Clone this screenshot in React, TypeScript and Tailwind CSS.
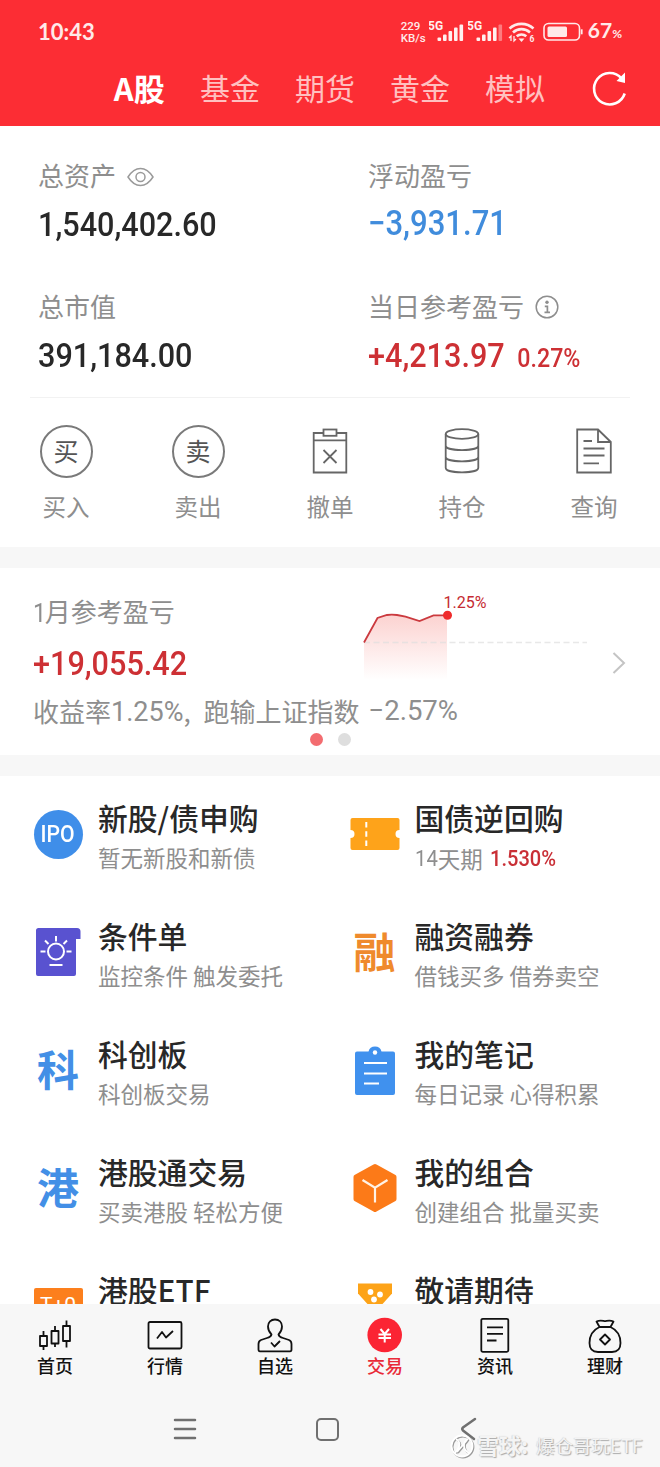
import type { ReactNode } from "react";
import clsx from "clsx";

const TABS = ["A股", "基金", "期货", "黄金", "模拟"];

function Figure({ children, className }: { children: ReactNode; className?: string }) {
  return (
    <span
      className={clsx(
        "block w-max origin-left scale-x-[0.9] font-['Roboto','Noto_Sans_CJK_SC',sans-serif] font-medium whitespace-nowrap",
        className
      )}
    >
      {children}
    </span>
  );
}

// ---- STATUS BAR ----

function Signal({ weak }: { weak?: boolean }) {
  return (
    <svg width="36" height="22" viewBox="0 0 36 22" fill="#fff0f0" className="shrink-0">
      <text x="-1" y="9" fontSize="12" fontWeight="700" fontFamily="Roboto">
        5G
      </text>
      <rect x="8.500" y="16.500" width="3.600" height="3.500" rx="1" />
      <rect x="14" y="13.500" width="3.600" height="6.500" rx="1" />
      <rect x="19.500" y="10" width="3.600" height="10" rx="1" />
      <rect x="25" y="6.500" width="3.600" height="13.500" rx="1" />
      <rect x="30.500" y="3.500" width="3.600" height="16.500" rx="1" opacity={weak ? 0.4 : 1} />
    </svg>
  );
}

function StatusBar() {
  return (
    <div className="flex h-[63px] items-center pr-[38px] pl-[38px] text-[#ffe9e9]">
      <span className="font-['Lato','Roboto',sans-serif] text-[22px] font-bold">10:43</span>
      <div className="ml-auto flex items-center">
        <div className="w-[28px] font-['Roboto',sans-serif] text-[11.500px] font-medium">
          <div className="leading-[12px]">229</div>
          <div className="leading-[12px]">KB/s</div>
        </div>
        <Signal />
        <span className="w-[3px]" />
        <Signal weak />
        <svg width="29" height="22" viewBox="0 0 29 22" fill="none" stroke="#ffe9e9" className="ml-[4px]">
          <path d="M1.500 7.500a18 18 0 0 1 24 0M5 11.500a12.500 12.500 0 0 1 17 0M8.700 15.300a7.200 7.200 0 0 1 9.600 0" strokeWidth="2.600" />
          <path d="M10.500 17.500h6l-3 3.500z" fill="#ffe9e9" stroke="none" />
          <path d="M3 20v-5l-2 2M6 15v5l2-2" strokeWidth="1.300" />
          <text x="21.500" y="21" fontSize="8.500" fontWeight="700" fontFamily="Roboto" fill="#ffe9e9" stroke="none">
            6
          </text>
        </svg>
        <svg width="42" height="20" viewBox="0 0 42 20" fill="none" className="ml-[6px]">
          <rect x="1" y="1.500" width="35.500" height="16.500" rx="4.500" stroke="#ffe9e9" strokeWidth="1.600" />
          <rect x="4.500" y="4.500" width="19.500" height="10.500" rx="1.500" fill="#ffe9e9" />
          <path d="M38.700 7.300v5" stroke="#ffe9e9" strokeWidth="1.800" />
        </svg>
        <span className="ml-[3px] font-['Lato','Roboto',sans-serif] text-[21px] leading-[22px] font-bold">
          67<span className="text-[12px]">%</span>
        </span>
      </div>
    </div>
  );
}

function Header() {
  return (
    <header className="h-[126px] bg-[#fc2d34]">
      <StatusBar />
      <nav className="flex h-[52px] items-center pl-[91px]">
        {TABS.map((tab, i) => (
          <span
            key={tab}
            className={clsx(
              "pb-[4px] text-center text-[30px] leading-none",
              i === 0 ? "w-[91.500px] pl-[5px] text-[31px] font-bold text-white" : "w-[95px] text-[#ffc0c0]"
            )}
          >
            {tab}
          </span>
        ))}
        <svg width="40" height="40" viewBox="0 0 40 40" fill="none" stroke="white" strokeWidth="2.600" className="ml-[27px]">
          <path d="M34.700 24.500a15.700 15.700 0 1 1-3.200-15.200" />
          <path d="M35 3.500v10.500l-8.500-2z" fill="white" stroke="none" />
        </svg>
      </nav>
    </header>
  );
}

// ---- ACCOUNT ----

function Balance({ label, icon, children }: { label: string; icon?: ReactNode; children: ReactNode }) {
  return (
    <div className="h-[131px]">
      <div className="flex h-[36px] items-center gap-[11px] text-[26px] text-[#8e8e8e]">
        <span className="pb-[3px] leading-none">{label}</span>
        {icon}
      </div>
      <div className="mt-[10px] flex h-[40px] items-center text-[34px]">{children}</div>
    </div>
  );
}

function EyeIcon() {
  return (
    <svg width="27" height="20" viewBox="0 0 27 20" fill="none" stroke="#9a9a9a" strokeWidth="1.500" className="mt-px">
      <path d="M1 10C4.500 4.500 8.500 1.500 13.500 1.500S22.500 4.500 26 10C22.500 15.500 18.500 18.500 13.500 18.500S4.500 15.500 1 10Z" />
      <circle cx="13.500" cy="10" r="4.500" />
    </svg>
  );
}

function InfoIcon() {
  return (
    <svg width="24" height="24" viewBox="0 0 24 24" fill="none" stroke="#8e8e8e" strokeWidth="1.500">
      <circle cx="12" cy="12" r="10.800" />
      <circle cx="12" cy="7.300" r="1.700" fill="#8e8e8e" stroke="none" />
      <path d="M9.800 11.300H12.400V17.200M9.500 17.400H15" strokeWidth="1.700" />
    </svg>
  );
}

function CircleGlyph({ char }: { char: string }) {
  return (
    <span className="flex size-[53px] items-center justify-center rounded-full border-2 border-[#7a7a7a] pb-[2px] text-[25px] leading-none text-[#555]">
      {char}
    </span>
  );
}

const ACTIONS: { label: string; icon: ReactNode }[] = [
  { label: "买入", icon: <CircleGlyph char="买" /> },
  { label: "卖出", icon: <CircleGlyph char="卖" /> },
  {
    label: "撤单",
    icon: (
      <svg width="54" height="54" viewBox="0 0 54 54" fill="none" stroke="#666" strokeWidth="1.800">
        <path d="M20.500 9H10.700V48.500H43.300V9H33.500M10.700 16.300H43.300" />
        <rect x="20.500" y="5.500" width="13" height="6.300" />
        <path d="M20.500 26L33.500 39M33.500 26L20.500 39" />
      </svg>
    ),
  },
  {
    label: "持仓",
    icon: (
      <svg width="54" height="54" viewBox="0 0 54 54" fill="none" stroke="#666" strokeWidth="1.800">
        <ellipse cx="27" cy="10" rx="16.300" ry="4.800" />
        <path d="M10.700 10V43.700C10.700 49.900 43.300 49.900 43.300 43.700V10M10.700 21.500C10.700 27.700 43.300 27.700 43.300 21.500M10.700 32.700C10.700 38.900 43.300 38.900 43.300 32.700" />
      </svg>
    ),
  },
  {
    label: "查询",
    icon: (
      <svg width="54" height="54" viewBox="0 0 54 54" fill="none" stroke="#666" strokeWidth="1.800">
        <path d="M10.200 5.500H31L43.800 18V48.500H10.200ZM31 5.500V18H43.800" />
        <path d="M16.500 17H25M16.500 24.500H37.500M16.500 31.500H37.500M16.500 39.300H32" />
      </svg>
    ),
  },
];

function Account() {
  return (
    <section className="h-[421px] bg-white">
      <div className="grid h-[271px] grid-cols-[330px_1fr] pt-[32px] pl-[38px]">
        <Balance label="总资产" icon={<EyeIcon />}>
          <Figure className="text-[#282828]">1,540,402.60</Figure>
        </Balance>
        <Balance label="浮动盈亏">
          <Figure className="text-[34.500px] text-[#408cdc]">−3,931.71</Figure>
        </Balance>
        <Balance label="总市值">
          <Figure className="text-[#282828]">391,184.00</Figure>
        </Balance>
        <Balance label="当日参考盈亏" icon={<InfoIcon />}>
          <Figure className="text-[#cd3034]">
            +4,213.97<span className="ml-[14px] text-[25.800px]">0.27%</span>
          </Figure>
        </Balance>
      </div>
      <div className="mx-[30px] h-px bg-[#f2f2f2]" />
      <div className="grid grid-cols-5 pt-[26px]">
        {ACTIONS.map((a) => (
          <div key={a.label} className="flex flex-col items-center">
            <div className="flex size-[54px] items-center justify-center">{a.icon}</div>
            <span className="mt-[14px] text-[23.500px] leading-[28px] text-[#8e8e8e]">{a.label}</span>
          </div>
        ))}
      </div>
    </section>
  );
}

// ---- MONTHLY PROFIT ----

function ProfitChart() {
  return (
    <svg width="230" height="94" viewBox="0 0 230 94" fill="none">
      <defs>
        <linearGradient id="profit" x1="0" y1="0" x2="0" y2="1">
          <stop offset="0" stopColor="#fcd2d0" />
          <stop offset="1" stopColor="#fff" />
        </linearGradient>
      </defs>
      <path d="M5 52.500L18.500 28L32.500 24.500L46.500 26.700L60.500 31L74.500 25.300H88V90H5Z" fill="url(#profit)" />
      <path d="M5 52.500H228" stroke="#dedede" strokeOpacity="0.700" strokeWidth="1.300" strokeDasharray="6 3.500" />
      <path d="M5 52.500L18.500 28L28 25Q32.500 24.200 38 25L46.500 26.700L60.500 31L74.500 25.300H88" stroke="#cb3a3f" strokeWidth="1.800" />
      <circle cx="88.500" cy="25.300" r="4.500" fill="#ef2b2b" />
      <text x="84.500" y="17.500" fontSize="17" fontFamily="Roboto" fill="#c52b32" textLength="43" lengthAdjust="spacingAndGlyphs">
        1.25%
      </text>
    </svg>
  );
}

function MonthlyProfit() {
  return (
    <section className="h-[187px] bg-white pl-[33px]">
      <div className="flex">
        <div className="w-[326px] pt-[25px]">
          <div className="h-[36px] text-[26px] leading-[36px] text-[#8e8e8e]">
            <Figure className="inline-block font-normal">1</Figure>
            <span className="-ml-[3px]">月参考盈亏</span>
          </div>
          <div className="mt-[14px] h-[40px]">
            <Figure className="text-[34px] leading-[40px] text-[#cd3034]">+19,055.42</Figure>
          </div>
        </div>
        <div className="pt-[22px]">
          <ProfitChart />
        </div>
        <svg width="14" height="24" viewBox="0 0 14 24" fill="none" stroke="#c4c4c4" strokeWidth="2" className="mt-[83px] ml-[23px]">
          <path d="M1.500 2L12 12L1.500 22" />
        </svg>
      </div>
      <div className="mt-[9px] flex h-[36px] items-center text-[26px] leading-[36px] whitespace-nowrap text-[#8e8e8e]">
        收益率
        <span className="pt-[2px] font-['Roboto',sans-serif] text-[27px]">1.25%</span>
        <span className="w-[20px]">,</span>
        跑输上证指数
        <span className="ml-[9px] font-['Roboto',sans-serif] text-[27.500px]">−2.57%</span>
      </div>
      <div className="mt-[4px] flex gap-[15px] pl-[277px]">
        <span className="size-[13px] rounded-full bg-[#f36c70]" />
        <span className="size-[13px] rounded-full bg-[#dedede]" />
      </div>
    </section>
  );
}

// ---- FEATURES ----

function GlyphIcon({ char, className }: { char: string; className: string }) {
  return <span className={clsx("pb-[4px] text-[42px] leading-[46px] font-bold", className)}>{char}</span>;
}

interface Feature {
  title: string;
  sub?: ReactNode;
  icon: ReactNode;
}

const FEATURES: Feature[] = [
  {
    title: "新股/债申购",
    sub: "暂无新股和新债",
    icon: (
      <span className="flex size-[49px] items-center justify-center rounded-full bg-[#3f8ee9] pt-[2px] font-['Roboto',sans-serif] text-[23px] font-medium text-white">
        <span className="scale-x-[0.92]">IPO</span>
      </span>
    ),
  },
  {
    title: "国债逆回购",
    sub: (
      <span className="flex items-center">
        <Figure className="-mr-[2px] font-normal">14</Figure>天期
        <Figure className="ml-[7px] pt-px text-[22.300px] text-[#c92f36]">1.530%</Figure>
      </span>
    ),
    icon: (
      <svg width="50" height="50" viewBox="0 0 50 50">
        <path d="M2.500 9H47.500Q49.500 9 49.500 11V21A4 4 0 0 0 49.500 29V39Q49.500 41 47.500 41H2.500Q.500 41 .500 39V29A4 4 0 0 0 .500 21V11Q.500 9 2.500 9Z" fill="#fea31a" />
        <path d="M16.300 13V37" stroke="white" strokeWidth="2" strokeDasharray="5.500 3.700" />
      </svg>
    ),
  },
  {
    title: "条件单",
    sub: "监控条件 触发委托",
    icon: (
      <svg width="50" height="50" viewBox="0 0 50 50" fill="none">
        <path d="M5.500 1H44Q47.500 1 47.500 4.500V12H43V47Q43 49 41 49H5Q3 49 3 47V3.500Q3 1 5.500 1Z" fill="#5952d0" />
        <g stroke="white" strokeWidth="2">
          <circle cx="23" cy="24.500" r="8" />
          <path d="M23 9V14.500M12 13.500L15.500 17M34 13.500L30.500 17M7.500 24.500H12.500M33.500 24.500H38.500M16.500 38H29.500" />
        </g>
      </svg>
    ),
  },
  { title: "融资融券", sub: "借钱买多 借券卖空", icon: <GlyphIcon char="融" className="text-[#ef8a2c]" /> },
  { title: "科创板", sub: "科创板交易", icon: <GlyphIcon char="科" className="text-[#438fe6]" /> },
  {
    title: "我的笔记",
    sub: "每日记录 心得积累",
    icon: (
      <svg width="50" height="50" viewBox="0 0 50 50" fill="none">
        <path d="M7 6.500H18.500A6.700 6.700 0 0 1 31.500 6.500H43Q45 6.500 45 8.500V48Q45 50 43 50H7Q5 50 5 48V8.500Q5 6.500 7 6.500Z" fill="#4091ee" />
        <circle cx="25" cy="7.500" r="2.200" fill="white" />
        <path d="M14 18H37M14 28.500H37M14 38.500H29" stroke="white" strokeWidth="2" />
      </svg>
    ),
  },
  { title: "港股通交易", sub: "买卖港股 轻松方便", icon: <GlyphIcon char="港" className="text-[#438fe6]" /> },
  {
    title: "我的组合",
    sub: "创建组合 批量买卖",
    icon: (
      <svg width="50" height="50" viewBox="0 0 50 50" fill="none">
        <path d="M23.500 1.500Q25 .500 26.500 1.500L45.500 12Q46.500 12.600 46.500 14V36Q46.500 37.400 45.500 38L26.500 48.500Q25 49.500 23.500 48.500L4.500 38Q3.500 37.400 3.500 36V14Q3.500 12.600 4.500 12Z" fill="#fc7a18" />
        <path d="M12.500 17L25 24.800L37.500 17M25 24.800V39.500" stroke="#fff2e6" strokeWidth="2.200" />
      </svg>
    ),
  },
  {
    title: "港股ETF",
    icon: (
      <span className="flex h-[36px] w-[49px] items-center justify-center rounded-[2px] bg-[#fc7f1d] font-['Roboto',sans-serif] text-[21px] text-white">
        T+0
      </span>
    ),
  },
  {
    title: "敬请期待",
    icon: (
      <svg width="50" height="50" viewBox="0 0 50 50">
        <path d="M8 2.500H42V12.500L33 22.500Q25 31 17 22.500L8 12.500Z" fill="#fda318" />
        <circle cx="20.500" cy="11" r="2.900" fill="white" />
        <circle cx="30" cy="13.500" r="2.900" fill="white" />
        <circle cx="24" cy="18.500" r="2.900" fill="white" />
      </svg>
    ),
  },
];

function Features() {
  return (
    <section className="grid h-[528px] auto-rows-[118px] grid-cols-[316.500px_1fr] content-start overflow-hidden bg-white pt-[23px]">
      {FEATURES.map((f) => (
        <div key={f.title} className="flex pl-[33px]">
          <div className="mt-[10px] flex size-[50px] shrink-0 items-center justify-center">{f.icon}</div>
          <div className="ml-[15px] whitespace-nowrap">
            <div className="h-[37px] text-[29.800px] leading-[37px] font-medium text-[#282828]">{f.title}</div>
            {f.sub && <div className="mt-[6px] text-[22.500px] leading-[30px] text-[#8e8e8e]">{f.sub}</div>}
          </div>
        </div>
      ))}
    </section>
  );
}

// ---- BOTTOM BAR ----

const NAV: { label: string; icon: ReactNode }[] = [
  {
    label: "首页",
    icon: (
      <>
        <rect x="3" y="19" width="7" height="10" />
        <rect x="14.500" y="14" width="7" height="12.500" />
        <rect x="26" y="9" width="7" height="15" />
        <path d="M6.500 14V19M6.500 29V33M18 9V14M18 26.500V30M29.500 3.500V9M29.500 24V30.500" />
      </>
    ),
  },
  {
    label: "行情",
    icon: (
      <>
        <rect x="1.500" y="5" width="33" height="26.500" rx="1.500" />
        <path d="M10 21.500L15 15L19 20.500L26 14" />
      </>
    ),
  },
  {
    label: "自选",
    icon: (
      <>
        <path d="M14.500 17.500C12 15 11 12.500 11 9.500C11 5 14 2.500 18 2.500S25 5 25 9.500C25 12.500 24 15 21.500 17.500C22 19.500 24 20.500 26 21L32 23Q34.500 24 34.500 27V32.500Q34.500 34.300 33 34.300H3Q1.500 34.300 1.500 32.500V27Q1.500 24 4 23L10 21C12 20.500 14 19.500 14.500 17.500Z" />
        <path d="M14 25.500L17.500 29.500L23 24" />
      </>
    ),
  },
  {
    label: "交易",
    icon: (
      <>
        <circle cx="17.700" cy="18" r="17.300" fill="#fb2433" stroke="none" />
        <path d="M13.500 12L17.700 17L22 12M11.500 17.500H24M11.500 21H24M17.700 17V25.500" stroke="white" strokeWidth="2" />
      </>
    ),
  },
  {
    label: "资讯",
    icon: (
      <>
        <rect x="4.300" y="1.800" width="27" height="33" rx="1.500" />
        <path d="M10 10.300H26M10 16.800H26M10 23.500H19.500" />
      </>
    ),
  },
  {
    label: "理财",
    icon: (
      <>
        <path d="M12.500 10L9.500 4.500C13 3 15 3.800 18 4.200C21 3.800 23 3 26.500 4.500L23.500 10ZM12.500 10C6 13 2.500 19 2.500 26C2.500 32 6 35 11 35H25C30 35 33.500 32 33.500 26C33.500 19 30 13 23.500 10" />
        <path d="M18 17.500L23 22.500L18 27.500L13 22.500Z" />
      </>
    ),
  },
];

function Watermark() {
  return (
    <div className="absolute top-[1431px] left-[449px] flex h-[30px] items-center text-[18.500px] whitespace-nowrap text-[#f4f4f4] [text-shadow:1px_1px_1px_#aaa,-0.5px_-0.5px_1px_#ccc]">
      <svg width="26" height="26" viewBox="0 0 26 26" fill="none" className="mr-[2px] drop-shadow-[1px_1px_0.5px_#999]">
        <circle cx="13" cy="13" r="10.500" stroke="white" strokeWidth="1.800" />
        <path d="M7 6C13 9 10 17 5.500 20M19 6C13 9 14 17 20 20M8 19L18 7" stroke="white" strokeWidth="1.800" />
      </svg>
      <span className="w-[59px] pb-[4px] text-[22px] leading-none font-bold">雪球:</span>
      <span>爆仓哥玩ETF</span>
    </div>
  );
}

function BottomBar() {
  return (
    <footer className="h-[163px] bg-[#f7f7f7]">
      <div className="grid grid-cols-6 pt-[13px]">
        {NAV.map((n) => (
          <div key={n.label} className="flex flex-col items-center">
            <svg width="36" height="36" viewBox="0 0 36 36" fill="none" stroke="#111" strokeWidth="1.800" strokeLinejoin="round">
              {n.icon}
            </svg>
            <span
              className={clsx(
                "text-[18px] leading-[24px] font-medium",
                n.label === "交易" ? "text-[#e92a38]" : "text-[#111]"
              )}
            >
              {n.label}
            </span>
          </div>
        ))}
      </div>
      <div className="flex items-center pt-[38px] pl-[172px]">
        <svg width="26" height="28" viewBox="0 0 26 28" stroke="#707070" strokeWidth="2.500" strokeLinecap="round">
          <path d="M3 5H23M3 14H23M3 23H23" />
        </svg>
        <span className="ml-[118px] size-[23px] rounded-[5px] border-[2.500px] border-[#707070]" />
        <svg width="18" height="28" viewBox="0 0 18 28" fill="none" stroke="#707070" strokeWidth="2.500" strokeLinecap="round" className="ml-[120px]">
          <path d="M16 4L4 12.500Q2.500 14 4 15.500L15 24" />
        </svg>
      </div>
    </footer>
  );
}

export default function App() {
  return (
    <div className="relative h-[1467px] w-[660px] overflow-hidden bg-[#f7f7f7] font-['Noto_Sans_CJK_SC',sans-serif]">
      <Header />
      <Account />
      <div className="h-[21px]" />
      <MonthlyProfit />
      <div className="h-[21px]" />
      <Features />
      <BottomBar />
      <Watermark />
    </div>
  );
}
